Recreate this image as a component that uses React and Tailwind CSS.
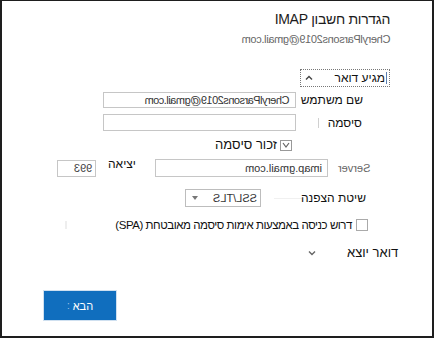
import React from "react";

const font = { fontFamily: '"Liberation Sans", "DejaVu Sans", Arial, sans-serif' };

function Mirror({ children, className = "" }) {
  return <span className={"inline-block shrink-0 whitespace-nowrap -scale-x-100 " + className}>{children}</span>;
}

function ChevronUp() {
  return (
    <svg width="8" height="6" viewBox="0 0 8 6" className="block shrink-0">
      <path d="M1 4.5 L4 1.5 L7 4.5" fill="none" stroke="#444" strokeWidth="1.4" />
    </svg>
  );
}
function ChevronDown() {
  return (
    <svg width="8" height="6" viewBox="0 0 8 6" className="block shrink-0">
      <path d="M1 1.5 L4 4.5 L7 1.5" fill="none" stroke="#666" strokeWidth="1.4" />
    </svg>
  );
}

export default function App() {
  return (
    <div className="w-[435px] h-[338px] bg-white whitespace-nowrap" style={font}>
      <div className="w-[434px] h-[338px] box-border border-l-2 border-t border-r-2 border-b-2 border-[#1e1e1e] flex flex-col text-[#222]">
        {/* title */}
        <div className="mt-[8px] h-[20px] flex justify-end pr-[42px]">
          <span dir="rtl" className="text-[14px] leading-[20px] tracking-[-0.3px] text-[#1b1b1b]">הגדרות חשבון IMAP</span>
        </div>
        {/* email */}
        <div className="mt-[2px] h-[16px] flex justify-end pr-[42px]">
          <Mirror className="text-[11px] leading-[16px] tracking-[-0.35px] text-[#666]">CherylParsons2019@gmail.com</Mirror>
        </div>
        {/* incoming dropdown */}
        <div className="mt-[22px] h-[18px] flex justify-end pr-[42px]">
          <div className="w-[90px] h-[18px] shrink-0 box-border border border-dotted border-[#777] flex items-center justify-between pl-[4px] pr-[2px]">
            <ChevronUp />
            <div className="flex items-center h-full">
              <span dir="rtl" className="text-[12px] leading-[14px] text-[#111]">מגיע דואר</span>
              <span className="w-px h-[12px] bg-[#5b7fb0] ml-[1px]" />
            </div>
          </div>
        </div>
        {/* username */}
        <div className="mt-[5px] h-[16px] flex items-center pl-[101px]">
          <div className="w-[193px] h-[16px] shrink-0 box-border border border-[#c6c6c6] flex items-center justify-end pr-[6px]">
            <Mirror className="text-[11px] leading-[14px] tracking-[-0.5px] text-[#333]">CherylParsons2019@gmail.com</Mirror>
          </div>
          <span className="ml-[15px] shrink-0 w-[2px] h-[6px] bg-[#d6d6d6]" />
          <span dir="rtl" className="ml-[3px] shrink-0 w-[47px] text-right text-[12px] leading-[16px] text-[#111]">שם משתמש</span>
        </div>
        {/* password */}
        <div className="mt-[6px] h-[17px] flex items-center pl-[101px]">
          <div className="w-[193px] h-[17px] shrink-0 box-border border border-[#c6c6c6]" />
          <span className="ml-[22px] shrink-0 w-px h-[10px] bg-[#d0d0d0]" />
          <span dir="rtl" className="ml-[12px] shrink-0 w-[31px] text-right text-[12px] leading-[16px] text-[#111]">סיסמה</span>
        </div>
        {/* remember */}
        <div className="mt-[7px] h-[14px] flex items-center justify-end pr-[140px]">
          <span dir="rtl" className="text-[13px] leading-[14px] text-[#111]">זכור סיסמה</span>
          <span className="ml-[3px] shrink-0 w-[12px] h-[11px] box-border border border-[#999] flex items-center justify-center">
            <svg width="8" height="6" viewBox="0 0 8 6" className="block">
              <path d="M1 1 L4 5 L7 1" fill="none" stroke="#666" strokeWidth="1.2" />
            </svg>
          </span>
        </div>
        {/* server / port */}
        <div className="mt-[7px] h-[18px] flex items-center pl-[55px]">
          <div className="w-[39px] h-[17px] shrink-0 box-border border border-[#c6c6c6] flex items-center justify-end pr-[3px]">
            <Mirror className="text-[11px] leading-[14px] text-[#444]">993</Mirror>
          </div>
          <span dir="rtl" className="ml-[12px] shrink-0 self-start -mt-[2px] text-[12px] leading-[14px] text-[#111]">יציאה</span>
          <div className="ml-[19px] w-[173px] h-[18px] shrink-0 box-border border border-[#c6c6c6] flex items-center justify-end pr-[5px]">
            <Mirror className="text-[11px] leading-[14px] text-[#333]">imap.gmail.com</Mirror>
          </div>
          <Mirror className="ml-[10px] text-[11px] leading-[14px] text-[#666]">Server</Mirror>
        </div>
        {/* encryption */}
        <div className="mt-[12px] h-[18px] flex items-center pl-[183px]">
          <div className="w-[76px] h-[18px] shrink-0 box-border border border-[#bdbdbd] flex items-center justify-between pl-[6px] pr-[3px]">
            <svg width="6" height="4" viewBox="0 0 6 4" className="block">
              <path d="M0 0 L6 0 L3 4 Z" fill="#777" />
            </svg>
            <Mirror className="text-[11px] leading-[14px] text-[#333]">SSL/TLS</Mirror>
          </div>
          <span className="ml-[13px] shrink-0 w-[28px] h-px bg-[#f0f0f0]" />
          <span dir="rtl" className="ml-[8px] shrink-0 w-[56px] text-right text-[12px] leading-[14px] text-[#111]">שיטת הצפנה</span>
        </div>
        {/* SPA */}
        <div className="mt-[11px] h-[14px] flex items-center pl-[63px]">
          <span className="shrink-0 w-[2px] h-[8px] bg-[#eee]" />
          <span dir="rtl" className="ml-[53px] shrink-0 w-[232px] text-right text-[11.5px] leading-[14px] tracking-[-0.45px] text-[#111]">דרוש כניסה באמצעות אימות סיסמה מאובטחת (SPA)</span>
          <span className="ml-[4px] shrink-0 w-[12px] h-[12px] box-border border border-[#aaa]" />
        </div>
        {/* outgoing */}
        <div className="mt-[13px] h-[16px] flex items-center pl-[306px]">
          <ChevronDown />
          <span dir="rtl" className="ml-[31px] shrink-0 text-[13px] leading-[16px] text-[#111]">דואר יוצא</span>
        </div>
        {/* button */}
        <div className="mt-[29px] pl-[41px]">
          <div className="w-[74px] h-[31px] bg-[#106ebe] border border-[#cfe0f0] box-border flex items-center justify-center gap-[3px]">
            <span className="text-[#9ec3e6] text-[10px] leading-[12px]">:</span>
            <span dir="rtl" className="text-white text-[11px] leading-[12px]">הבא</span>
          </div>
        </div>
      </div>
    </div>
  );
}
